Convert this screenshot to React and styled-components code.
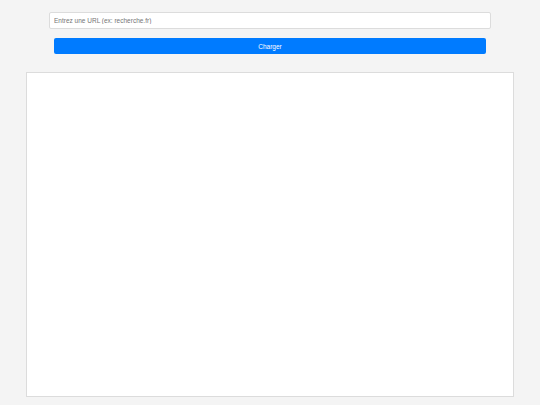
import React from "react";
import styled, { createGlobalStyle } from "styled-components";

const Global = createGlobalStyle`
  html, body { margin: 0; padding: 0; background: #f4f4f4; }
  body { font-family: "Liberation Sans", Arial, sans-serif; }
`;

const Page = styled.div`
  display: flex;
  flex-direction: column;
  align-items: center;
  padding-top: 12px;
  height: 405px;
  box-sizing: border-box;
`;

const UrlInput = styled.input`
  box-sizing: border-box;
  width: 442px;
  height: 17px;
  padding: 0 4px;
  border: 1px solid #dcdcdc;
  border-radius: 2px;
  background: #fff;
  font-family: "Liberation Sans", Arial, sans-serif;
  font-size: 6.5px;
  color: #333;
  outline: none;
  &::placeholder { color: #757575; }
`;

const LoadButton = styled.button`
  box-sizing: border-box;
  margin-top: 9px;
  width: 432px;
  height: 16px;
  border: none;
  border-radius: 2px;
  background: #007bff;
  color: #fff;
  font-family: "Liberation Sans", Arial, sans-serif;
  font-size: 6.5px;
  cursor: pointer;
  padding: 0;
`;

const Frame = styled.div`
  box-sizing: border-box;
  margin-top: 18px;
  width: 488px;
  height: 325px;
  background: #fff;
  border: 1px solid #dcdcdc;
`;

export default function App() {
  return (
    <>
      <Global />
      <Page>
        <UrlInput placeholder="Entrez une URL (ex: recherche.fr)" />
        <LoadButton>Charger</LoadButton>
        <Frame />
      </Page>
    </>
  );
}
